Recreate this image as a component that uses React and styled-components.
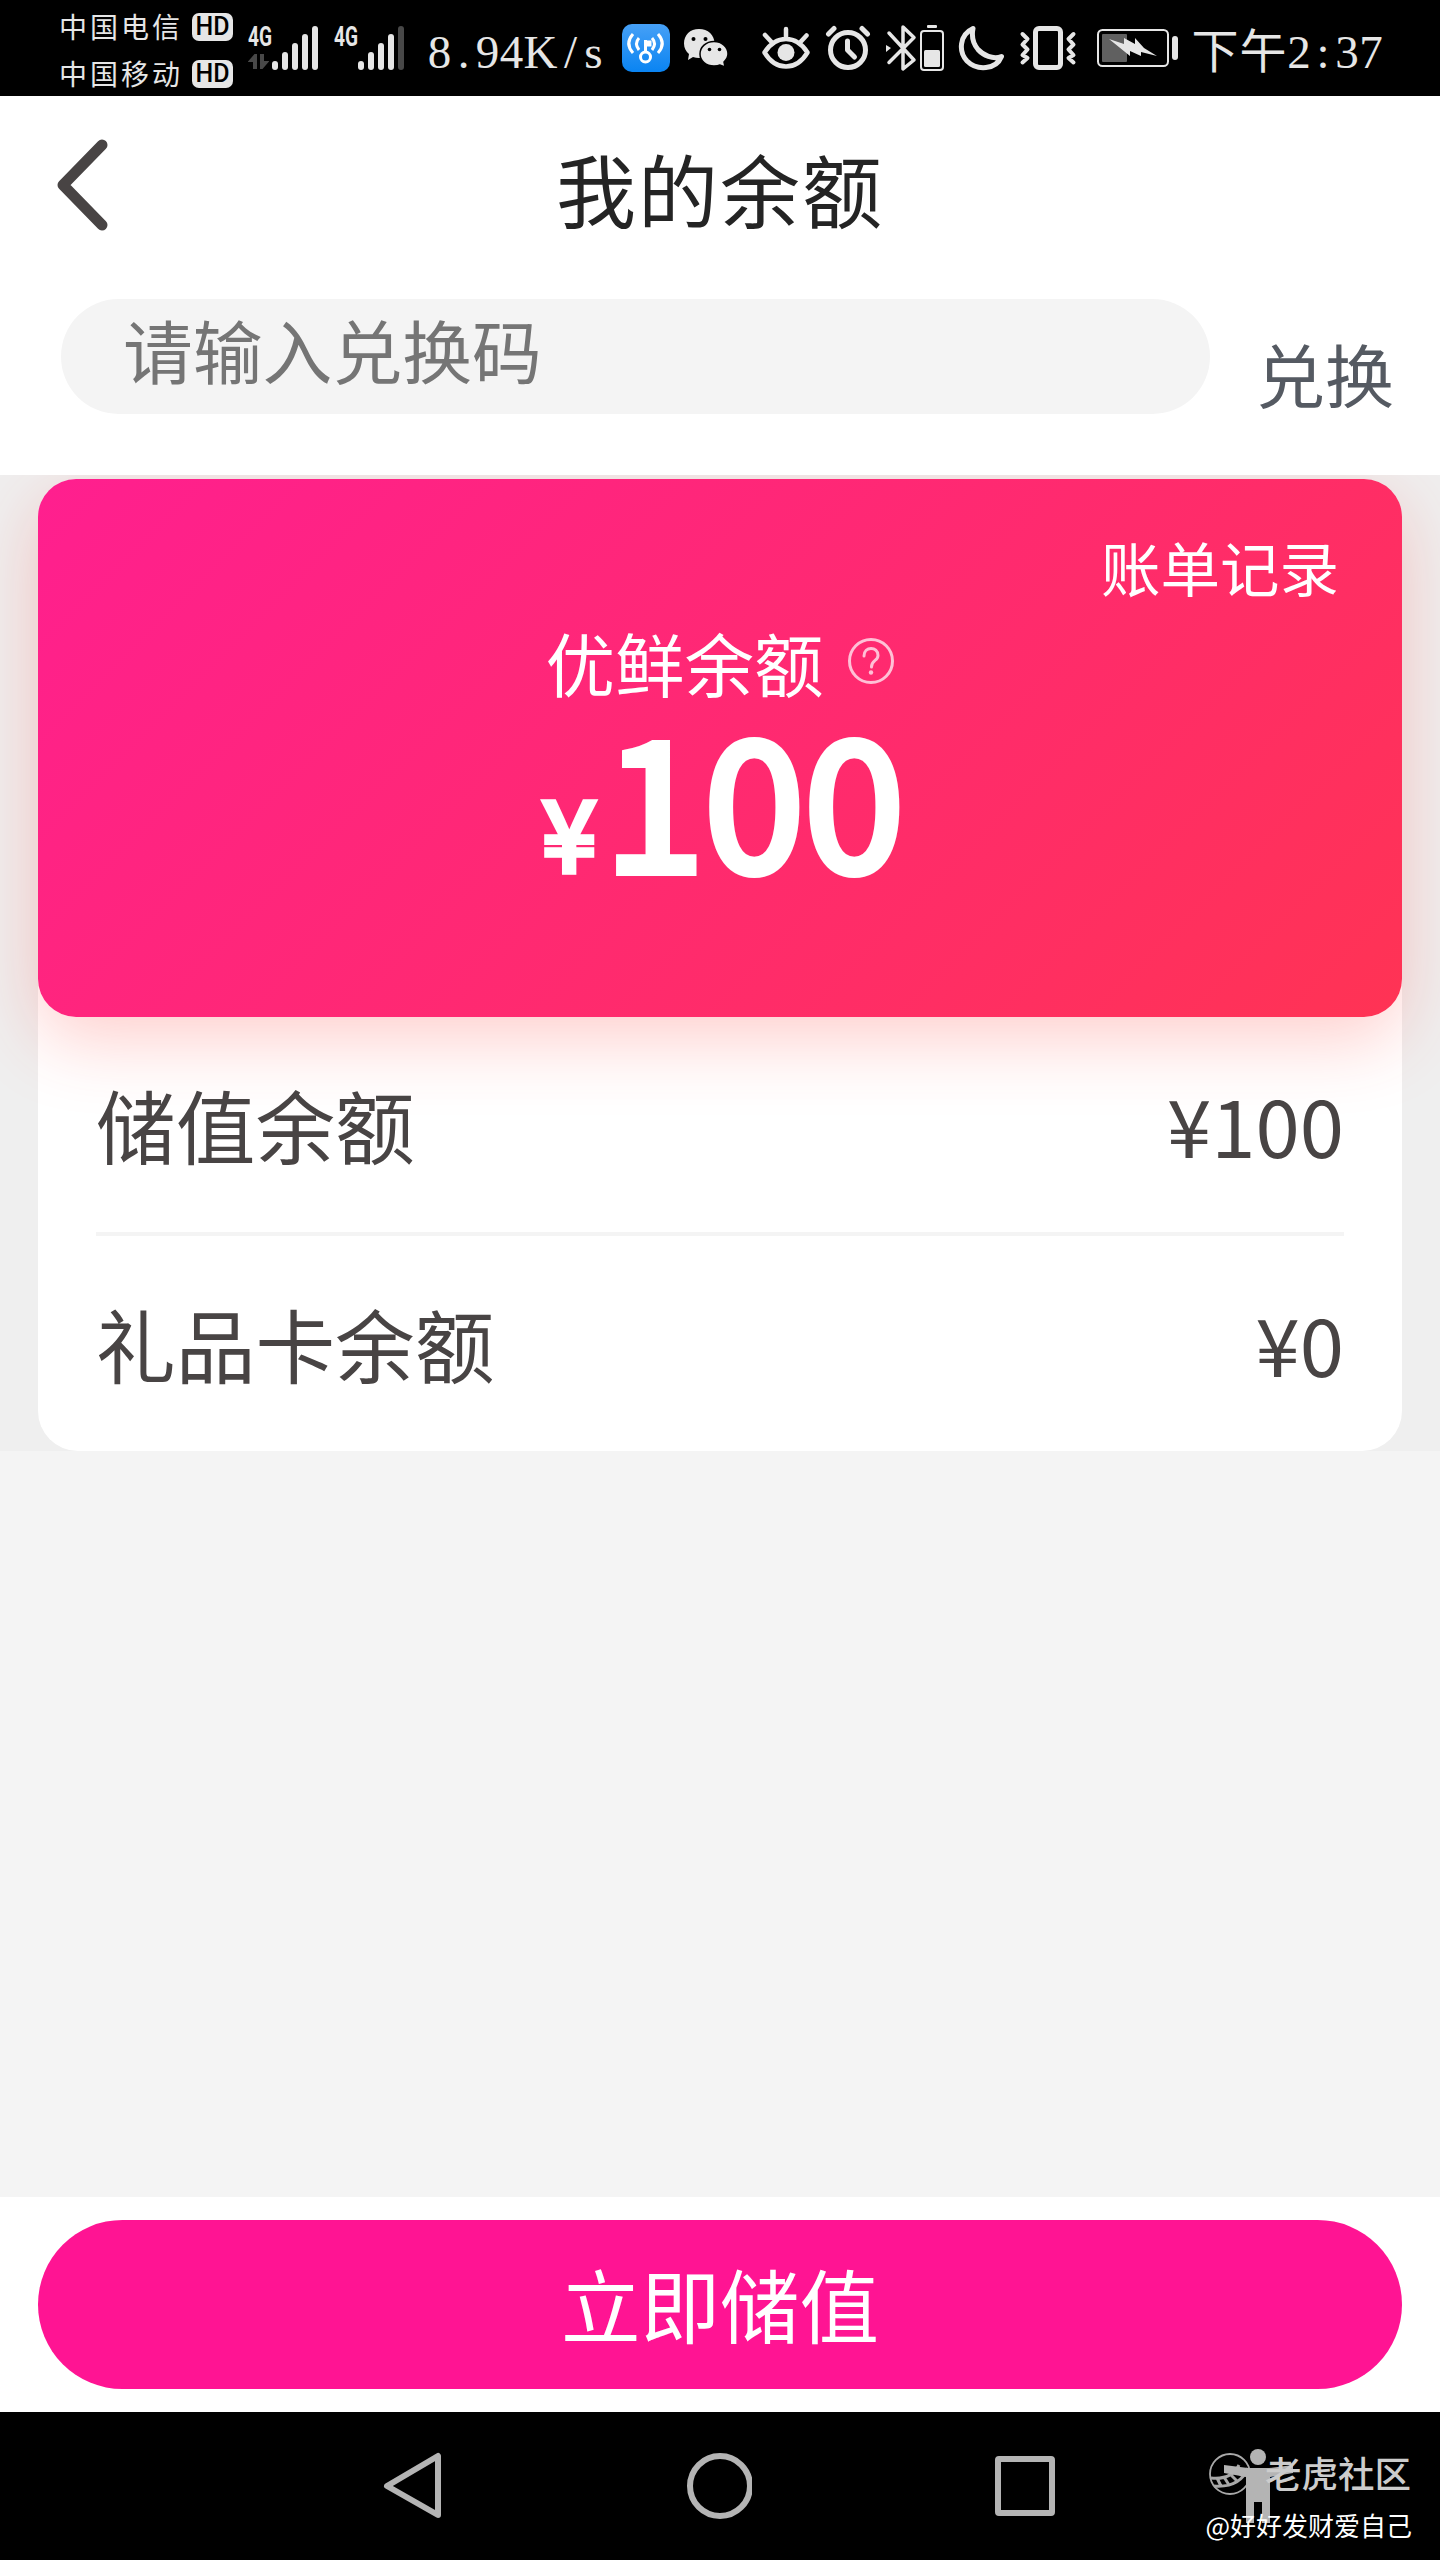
import React from "react";
import styled, { createGlobalStyle } from "styled-components";

const Global = createGlobalStyle`
  * { box-sizing: border-box; }
  body { margin: 0; background: #f4f4f4; }
  button, input { border: 0; padding: 0; margin: 0; background: none; font: inherit; outline: 0; }
`;

const Screen = styled.div`
  width: 1440px;
  height: 2560px;
  display: flex;
  flex-direction: column;
  background: #f4f4f4;
  color: #484444;
  font-family: "Noto Sans CJK SC", "Noto Sans", sans-serif;
  overflow: hidden;
`;

/* ---------- status bar ---------- */

const StatusBar = styled.header`
  height: 96px;
  flex: none;
  display: flex;
  background: #000;
  color: #e6e6e6;
  padding-left: 59px;
`;

const Carriers = styled.div`
  width: 174px;
  padding-top: 3px;
  display: flex;
  flex-direction: column;
`;

const Carrier = styled.div`
  height: 47px;
  display: flex;
  align-items: center;
  justify-content: space-between;
  font-size: 28px;
  font-weight: 400;
  letter-spacing: 3px;
  line-height: 47px;
`;

const HdBadge = styled.span`
  width: 41px;
  height: 28px;
  border-radius: 7px;
  background: #e6e6e6;
  color: #000;
  font: 500 25px/28px Roboto, sans-serif;
  letter-spacing: 0;
  text-align: center;
`;

const SignalText = styled.text`
  font: 700 27px Roboto, sans-serif;
  fill: #e6e6e6;
`;

const StatusIcon = styled.svg`
  display: block;
  flex: none;
  height: 96px;
  margin-left: ${(p) => p.$gap || 0}px;
`;

const MonoText = styled.div`
  display: flex;
  margin-left: ${(p) => p.$gap}px;
  font-family: "Liberation Serif", "Noto Sans CJK SC", serif;
  font-size: 47px;
  line-height: 60px;
  padding-top: 22px;
`;

const Cell = styled.span`
  width: ${(p) => p.$width}px;
  display: flex;
  justify-content: center;
  white-space: pre;
`;

const CELL_WIDTHS = { K: 34, "/": 26, s: 20, 下: 48, 午: 48 };

function Mono({ text, gap }) {
  return (
    <MonoText $gap={gap}>
      {[...text].map((c, i) => (
        <Cell key={i} $width={CELL_WIDTHS[c] || 24}>{c}</Cell>
      ))}
    </MonoText>
  );
}

function Icon({ x, w, gap, children }) {
  return (
    <StatusIcon width={w} viewBox={`${x} 0 ${w} 96`} $gap={gap} fill="none" stroke="none">
      {children}
    </StatusIcon>
  );
}

const INK = "#e6e6e6";
const BAR_TOPS = [61, 52, 43, 34, 26];

function Bars({ x, level }) {
  return BAR_TOPS.map((t, i) => (
    <rect key={t} x={x + i * 10} y={t} width="6" height={70 - t} rx="3" fill={i < level ? INK : "#484848"} />
  ));
}

function Status() {
  return (
    <StatusBar>
      <Carriers>
        <Carrier>中国电信<HdBadge>HD</HdBadge></Carrier>
        <Carrier>中国移动<HdBadge>HD</HdBadge></Carrier>
      </Carriers>
      <Icon x={247} w={72} gap={14}>
        <SignalText x="248" y="46" textLength="24" lengthAdjust="spacingAndGlyphs">4G</SignalText>
        <path d="M248 61.500L254.500 54H257V69H253V62H248ZM269 61.500L262.500 69H260V54H264V61H269Z" fill="#484848" />
        <Bars x={272} level={5} />
      </Icon>
      <Icon x={333} w={72} gap={14}>
        <SignalText x="334" y="46" textLength="24" lengthAdjust="spacingAndGlyphs">4G</SignalText>
        <Bars x={358} level={4} />
      </Icon>
      <Mono text="8.94K/s" gap={22.5} />
      <Icon x={621} w={50} gap={17.5}>
        <defs>
          <linearGradient id="key" x1="0" y1="0" x2="0" y2="1">
            <stop offset="0" stopColor="#46a0f6" />
            <stop offset="1" stopColor="#0a84f2" />
          </linearGradient>
        </defs>
        <rect x="622" y="24" width="48" height="48" rx="10" fill="url(#key)" />
        <g stroke="#fff" strokeWidth="3">
          <circle cx="645.500" cy="57" r="5" />
          <path d="M645.500 52V40M645.500 42H650V45H646" />
          <path d="M639 38Q634 43.500 639 50M652 38Q657 43.500 652 50M633 34Q624.500 43.500 633 53M658 34Q666.500 43.500 658 53" />
        </g>
      </Icon>
      <Icon x={683} w={46} gap={12}>
        <path d="M699 29C708 29 714.500 35 714.500 43.500S708 58 699 58C697 58 695 57.500 693 57L688 60L689 54C686 51.500 684 48 684 43.500C684 35 690 29 699 29Z" fill={INK} />
        <path d="M714 41.500C722 41.500 728 47 728 54C728 57.500 726 60 724 62L725 67L720 65C718 66 716 66 714 66C706 66 700 61 700 54S706 41.500 714 41.500Z" fill={INK} stroke="#000" strokeWidth="1.500" />
        <circle cx="693.500" cy="39" r="2" fill="#000" /><circle cx="705.500" cy="39" r="2" fill="#000" />
        <circle cx="709.500" cy="49.500" r="1.800" fill="#000" /><circle cx="719.500" cy="49.500" r="1.800" fill="#000" />
      </Icon>
      <Icon x={760} w={52} gap={31}>
        <path d="M764.500 52.500Q773 39 786 39T807.500 52.500Q799 66.500 786 66.500T764.500 52.500ZM786 38V29M771.500 42L765 35M800.500 42L806.500 35.500" stroke={INK} strokeWidth="4.500" strokeLinecap="round" strokeLinejoin="round" />
        <circle cx="786" cy="52.500" r="8.500" fill={INK} />
      </Icon>
      <Icon x={825} w={46} gap={13}>
        <circle cx="848" cy="50" r="17.500" stroke={INK} strokeWidth="5" />
        <path d="M847.500 41V50L854.500 57" stroke={INK} strokeWidth="5" strokeLinecap="round" strokeLinejoin="round" />
        <path d="M828.500 34L834 28.500M867.500 34L862 28.500" stroke={INK} strokeWidth="5" strokeLinecap="round" />
      </Icon>
      <Icon x={885} w={60} gap={14}>
        <path d="M889 33L914 60L903 69V27L914 37.500L889 62.500" stroke={INK} strokeWidth="3.500" strokeLinejoin="round" strokeLinecap="round" />
        <path d="M886 45L891 48L886 52Z" fill={INK} />
        <rect x="921" y="31" width="22" height="39" rx="3" stroke={INK} strokeWidth="2" />
        <rect x="924" y="50" width="16" height="17" rx="1.500" fill={INK} />
        <rect x="927" y="25" width="10" height="3" rx="1" fill={INK} />
      </Icon>
      <Icon x={958} w={48} gap={13}>
        <path d="M973 28.500C959 35 958.500 52 967 61C977 71 996 70 1001.500 56.500C993 60 983 55 978 49.500C972.500 43 971.500 36 973 28.500Z" stroke={INK} strokeWidth="5" strokeLinejoin="round" />
      </Icon>
      <Icon x={1019} w={58} gap={13}>
        <rect x="1035.500" y="28.500" width="25" height="39" rx="3.500" stroke={INK} strokeWidth="5" />
        <path d="M1022.500 34L1027.500 39L1022.500 44.500L1027.500 49.500L1022.500 55L1027.500 58L1022.500 62.500M1073.500 34L1068.500 39L1073.500 44.500L1068.500 49.500L1073.500 55L1068.500 58L1073.500 62.500" stroke={INK} strokeWidth="4" strokeLinecap="round" strokeLinejoin="round" />
      </Icon>
      <Icon x={1096} w={84} gap={19}>
        <rect x="1098" y="30" width="70" height="36" rx="4.500" stroke={INK} strokeWidth="2" />
        <rect x="1102" y="34" width="25" height="28" rx="1" fill="#606060" />
        <rect x="1172" y="36" width="6" height="24" rx="3" fill={INK} />
        <path d="M1109 39L1124 44V38L1135 44V38L1144 48L1157 56L1141 52V56L1130 51V56Z" fill={INK} />
      </Icon>
      <Mono text="下午2:37" gap={11} />
    </StatusBar>
  );
}

/* ---------- page head ---------- */

const Head = styled.section`
  height: 379px;
  flex: none;
  background: #fff;
`;

const TitleBar = styled.div`
  height: 203px;
  display: grid;
  grid-template-columns: 1fr auto 1fr;
  align-items: start;
`;

const BackButton = styled.button`
  width: 60px;
  height: 96px;
  margin: 39px 0 0 51px;
  svg { display: block; }
`;

const Title = styled.h1`
  margin: 31px 0 0;
  font-size: 80px;
  line-height: 120px;
  font-weight: 400;
  letter-spacing: 2px;
  color: #242424;
`;

const RedeemRow = styled.div`
  display: flex;
  align-items: flex-start;
  padding-left: 61px;
`;

const CodeInput = styled.input`
  width: 1149px;
  height: 115px;
  border-radius: 58px;
  background: #f4f4f4;
  padding: 0 62px 16px;
  font-size: 69.800px;
  color: #484444;
  &::placeholder { color: #757575; opacity: 1; }
`;

const RedeemButton = styled.button`
  margin: 14px 0 0 46px;
  font-size: 69px;
  line-height: 120px;
  color: #555a62;
`;

/* ---------- balance ---------- */

const Balance = styled.section`
  height: 976px;
  flex: none;
  padding: 4px 38px 0;
  background: #efefef;
  overflow: hidden;
`;

const Panel = styled.div`
  height: 972px;
  border-radius: 40px;
  background: #fff;
`;

const Card = styled.div`
  height: 538px;
  border-radius: 38px;
  background: linear-gradient(135deg, #ff1f8f 0%, #ff3354 100%);
  box-shadow: 0 22px 72px rgba(255, 60, 50, 0.25);
  color: #fff;
  display: flex;
  flex-direction: column;
  align-items: center;
`;

const BillLink = styled.a`
  align-self: flex-end;
  margin: 43px 63px 0 0;
  font-size: 59.500px;
  line-height: 88px;
`;

const CardLabel = styled.div`
  display: flex;
  align-items: center;
  gap: 23px;
  margin-top: 7px;
  font-size: 69.500px;
  line-height: 90px;
  svg { display: block; margin-top: -2px; }
`;

const Amount = styled.div`
  display: flex;
  align-items: baseline;
  margin: 12px 0 0 6px;
  font-size: 180px;
  line-height: 150px;
  -webkit-text-stroke: 8px #fff;
`;

const Yen = styled.span`
  font-size: 98px;
  margin-right: 8px;
  -webkit-text-stroke: 5.500px #fff;
`;

const Row = styled.div`
  height: ${(p) => p.$height}px;
  margin: 0 58px;
  padding-bottom: 2px;
  display: flex;
  align-items: center;
  justify-content: space-between;
  font-size: 79.700px;
  line-height: 116px;
  border-bottom: ${(p) => (p.$divided ? "4px solid #f4f4f4" : "0")};
`;

/* ---------- bottom ---------- */

const Spacer = styled.div`
  flex: 1;
`;

const Footer = styled.div`
  height: 215px;
  flex: none;
  background: #fff;
  padding: 23px 38px;
`;

const TopUp = styled.button`
  display: block;
  width: 100%;
  height: 169px;
  border-radius: 85px;
  background: #ff1493;
  color: #fff;
  font-size: 79.500px;
  line-height: 162px;
  padding-bottom: 3px;
`;

const NavBar = styled.nav`
  position: relative;
  height: 148px;
  flex: none;
  display: flex;
  align-items: center;
  background: #000;
  padding-left: 380px;
  gap: 236px;
`;

const NavIcon = styled.svg`
  width: 68px;
  height: 68px;
  fill: none;
  stroke: #b4b4b4;
  stroke-width: 6;
  stroke-linejoin: round;
`;

const Watermark = styled.div`
  position: absolute;
  right: 28px;
  bottom: 14px;
  width: 206px;
  height: 100px;
`;

const Figure = styled.svg`
  position: absolute;
  left: 0;
  top: 0;
`;

const Community = styled.div`
  position: absolute;
  right: 1px;
  top: 2px;
  font-size: 36.500px;
  line-height: 50px;
  font-weight: 500;
  color: #ccc;
  white-space: nowrap;
`;

const Author = styled.div`
  position: absolute;
  right: 0;
  top: 59px;
  font-size: 26px;
  line-height: 40px;
  color: #fff;
  white-space: nowrap;
`;

export default function App() {
  return (
    <Screen>
      <Global />
      <Status />
      <Head>
        <TitleBar>
          <BackButton aria-label="返回">
            <svg width="60" height="96" viewBox="0 0 60 96" fill="none">
              <path d="M51 10L12 50L51 90" stroke="#484444" strokeWidth="11" strokeLinecap="round" strokeLinejoin="round" />
            </svg>
          </BackButton>
          <Title>我的余额</Title>
        </TitleBar>
        <RedeemRow>
          <CodeInput placeholder="请输入兑换码" />
          <RedeemButton>兑换</RedeemButton>
        </RedeemRow>
      </Head>
      <Balance>
        <Panel>
          <Card>
            <BillLink>账单记录</BillLink>
            <CardLabel>
              优鲜余额
              <svg width="48" height="48" viewBox="0 0 48 48" fill="none" stroke="#ffc0d6" strokeWidth="3">
                <circle cx="24" cy="24" r="21.500" />
                <path d="M17 19C17 9 31 9 31 18.500C31 24 24.500 23 24.500 30" strokeLinecap="round" />
                <circle cx="24" cy="35.500" r="2.200" fill="#ffc0d6" stroke="none" />
              </svg>
            </CardLabel>
            <Amount><Yen>¥</Yen>100</Amount>
          </Card>
          <Row $height={219} $divided><span>储值余额</span><span>¥100</span></Row>
          <Row $height={215}><span>礼品卡余额</span><span>¥0</span></Row>
        </Panel>
      </Balance>
      <Spacer />
      <Footer>
        <TopUp>立即储值</TopUp>
      </Footer>
      <NavBar>
        <NavIcon viewBox="0 0 68 68"><path d="M58 4V63L7 34Z" /></NavIcon>
        <NavIcon viewBox="0 0 68 68"><circle cx="36" cy="34" r="30" /></NavIcon>
        <NavIcon viewBox="0 0 68 68"><rect x="10" y="7" width="54" height="54" rx="1" /></NavIcon>
        <Watermark>
          <Figure width="100" height="90" viewBox="1206 2446 100 90">
            <g fill="none" stroke="#a8a8a8" strokeWidth="1.800">
              <circle cx="1230" cy="2474" r="20" />
              <path d="M1211 2478Q1232 2480 1239 2465M1214 2486Q1240 2488 1248 2468M1217 2478L1221 2486M1224 2477L1229 2485M1230 2474L1237 2481M1235 2470L1243 2476" strokeWidth="3" />
            </g>
            <g fill="#b4b4b4">
              <circle cx="1258" cy="2457" r="8" />
              <path d="M1224 2465L1248 2468H1269L1293 2465V2473L1270 2477V2523H1262V2502H1254V2523H1246V2477L1224 2473Z" />
            </g>
          </Figure>
          <Community>老虎社区</Community>
          <Author>@好好发财爱自己</Author>
        </Watermark>
      </NavBar>
    </Screen>
  );
}
